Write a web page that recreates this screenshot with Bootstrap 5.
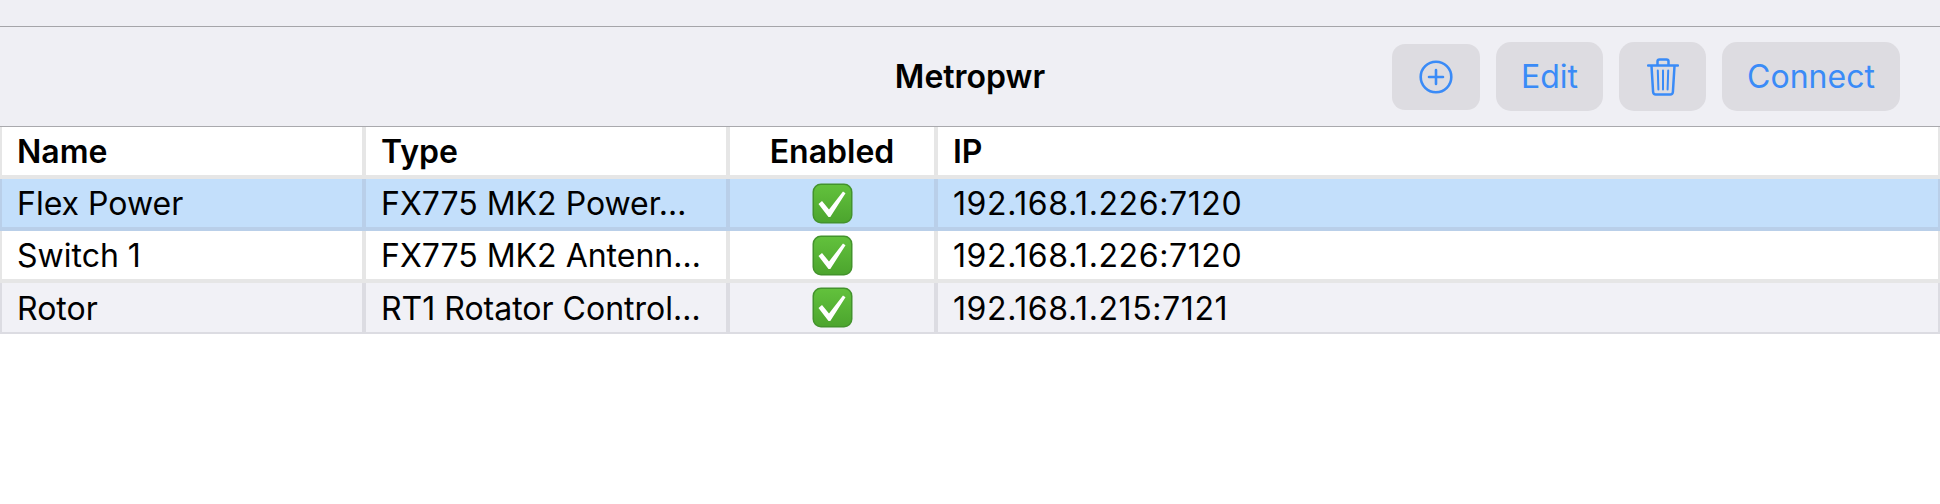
<!DOCTYPE html>
<html lang="en"><head><meta charset="utf-8">
<link href="https://cdn.jsdelivr.net/npm/bootstrap@5.3.0/dist/css/bootstrap.min.css" rel="stylesheet">
<style>
html,body{background:#fff;font-family:Inter,"Liberation Sans",sans-serif;color:#000;overflow:hidden}
.topstrip{height:26px;background:#efeff4;border-bottom:1px solid #a5a5a9;box-sizing:content-box}
.toolbar{display:grid;grid-template-columns:1fr auto 1fr;align-items:center;height:99px;background:#efeff4;border-bottom:1px solid #a9a9ad;box-sizing:content-box;padding:0 40px}
.tbtitle{font-size:32px;font-weight:600;line-height:1}
.tbactions{justify-self:end;gap:16px}
.tbbtn{background:#dddce1;color:#3a8bf7;border:0;border-radius:15px;height:69px;font-size:32px;line-height:1;padding:0;display:flex;align-items:center;justify-content:center}
.tbbtn:hover,.tbbtn:active{background:#dddce1;color:#3a8bf7}
.b-add{width:88px;height:66px;border-radius:13px}
.b-edit{width:107px}
.b-del{width:87px}
.b-conn{width:178px}
.devtable{width:1940px;table-layout:fixed;border-collapse:collapse;margin:0;font-size:32px;line-height:1}
.devtable th,.devtable td{height:52px;padding:2px 15px 0;border:4px solid #e6e6e6;white-space:nowrap;overflow:hidden;vertical-align:middle;background:#fff;color:#000;box-shadow:none}
.devtable th{font-weight:600;border-top:0;height:50px}
.devtable th:first-child,.devtable td:first-child{border-left-width:2px}
.devtable th:last-child,.devtable td:last-child{border-right-width:2px}
.devtable tr.rowsel td{background:#c3dffb;border-bottom-color:#b9cfe9;border-left-color:#b9cfe9;border-right-color:#b9cfe9}
.devtable tr.rowalt td{background:#f1f1f6;border-left-color:#dcdce2;border-right-color:#dcdce2;border-bottom-color:#dcdce2;border-bottom-width:2px}
.devtable td.ipcell{letter-spacing:.6px}
.devtable td.chkcell{padding:0}
.c-name{width:363px}.c-type{width:364px}.c-en{width:208px}
.chk{display:block;margin:0 auto;width:41px;height:41px}
</style></head>
<body>
<div class="topstrip"></div>
<div class="toolbar">
  <div></div>
  <div class="tbtitle">Metropwr</div>
  <div class="d-flex tbactions align-items-center">
    <button class="btn tbbtn b-add" aria-label="Add"><svg width="34" height="34" viewBox="0 0 34 34" fill="none" stroke="#3a8bf7"><circle cx="17" cy="17" r="15.300" stroke-width="2.600"/><path d="M17 10v14M10 17h14" stroke-width="2.600" stroke-linecap="round"/></svg></button>
    <button class="btn tbbtn b-edit">Edit</button>
    <button class="btn tbbtn b-del" aria-label="Delete"><svg width="32" height="38" viewBox="0 0 32 38" fill="none" stroke="#3a8bf7" stroke-width="2.500" stroke-linecap="round" stroke-linejoin="round"><path d="M1 7.500h30M10.500 7V3.500Q10.500 1.500 12.500 1.500h7Q21.500 1.500 21.500 3.500V7M4.500 8l1.600 26Q6.300 36.500 8.800 36.500h14.400Q25.700 36.500 25.900 34L27.500 8"/><path d="M10.800 12.500l.6 19M16 12.500v19M21.200 12.500l-.6 19" stroke-width="2"/></svg></button>
    <button class="btn tbbtn b-conn">Connect</button>
  </div>
</div>
<table class="table devtable">
  <colgroup><col class="c-name"><col class="c-type"><col class="c-en"><col></colgroup>
  <thead><tr><th>Name</th><th>Type</th><th class="text-center">Enabled</th><th>IP</th></tr></thead>
  <tbody>
    <tr class="rowsel"><td>Flex Power</td><td>FX775 MK2 Power…</td><td class="chkcell"><svg class="chk" viewBox="0 0 41 41"><use href="#ck"/></svg></td><td class="ipcell">192.168.1.226:7120</td></tr>
    <tr><td>Switch 1</td><td>FX775 MK2 Antenn…</td><td class="chkcell"><svg class="chk" viewBox="0 0 41 41"><use href="#ck"/></svg></td><td class="ipcell">192.168.1.226:7120</td></tr>
    <tr class="rowalt"><td>Rotor</td><td>RT1 Rotator Control…</td><td class="chkcell"><svg class="chk" viewBox="0 0 41 41"><use href="#ck"/></svg></td><td class="ipcell">192.168.1.215:7121</td></tr>
  </tbody>
</table>
<svg width="0" height="0" class="d-block"><defs>
  <linearGradient id="gk" x1="0" y1="0" x2="0" y2="1"><stop offset="0" stop-color="#62c13c"/><stop offset="1" stop-color="#4ca52e"/></linearGradient>
  <g id="ck"><rect x=".5" y=".5" width="40" height="40" rx="8.500" fill="#43932c"/><rect x="2" y="2" width="37" height="37" rx="7" fill="url(#gk)"/><path d="M6.500 21l3.500-3 7 8.500L31 8.500l2.500 1.800L18.300 34h-1.800z" fill="#fff"/></g>
</defs></svg>
</body></html>
